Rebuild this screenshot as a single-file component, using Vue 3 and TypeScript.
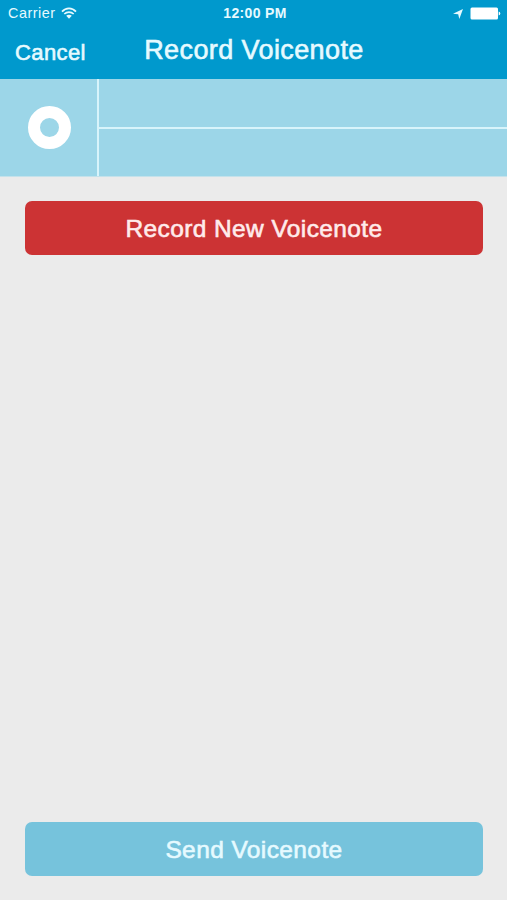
<script setup lang="ts">
import { ref } from 'vue'

const carrier = ref<string>('Carrier')
const time = ref<string>('12:00 PM')
</script>

<template>
  <main class="screen">
    <header class="top">
      <div class="status">
        <div class="network">
          <span class="carrier">{{ carrier }}</span>
          <svg class="wifi" width="16" height="12" viewBox="0 0 16 12" fill="none" stroke="#e6faff" stroke-width="1.7">
            <path d="M1 4.6C5 .2 11 .2 15 4.6" />
            <path d="M3.3 7C6 4.4 10 4.4 12.7 7" />
            <path d="M5.2 8.8C6.8 7.4 9.2 7.4 10.8 8.8L8 11.7Z" fill="#e6faff" stroke="none" />
          </svg>
        </div>
        <span class="time">{{ time }}</span>
        <div class="indicators">
          <svg width="10" height="10" viewBox="0 0 10 10" fill="#e6faff">
            <path d="M10 0L6.3 10L5.2 5.2L0 4.7Z" />
          </svg>
          <svg width="31" height="13" viewBox="0 0 31 13" fill="#fff">
            <rect x="0.5" y="0.5" width="27.5" height="12" rx="1.5" />
            <path d="M28.7 4.5Q30.3 5 30.3 6.5T28.7 8.5Z" />
          </svg>
        </div>
      </div>
      <nav class="nav">
        <button class="cancel" type="button">Cancel</button>
        <h1 class="title">Record Voicenote</h1>
      </nav>
    </header>
    <section class="recorder">
      <div class="disc"><span class="ring"></span></div>
      <div class="tracks">
        <div class="track"></div>
        <div class="track"></div>
      </div>
    </section>
    <section class="actions">
      <button class="action record" type="button">Record New Voicenote</button>
      <button class="action send" type="button">Send Voicenote</button>
    </section>
  </main>
</template>

<style>
body {
  margin: 0;
  background: #ebebeb;
}
</style>

<style scoped>
.screen {
  display: flex;
  flex-direction: column;
  width: 100%;
  height: 900px;
  overflow: hidden;
  background: #ebebeb;
  color: #e6faff;
  font-family: "Liberation Sans", Arial, sans-serif;
}
button {
  margin: 0;
  padding: 0;
  border: 0;
  background: none;
  color: inherit;
  font: inherit;
}
.top {
  height: 79px;
  flex: none;
  background: #0099cd;
}
.status {
  display: grid;
  grid-template-columns: 1fr auto 1fr;
  align-items: center;
  height: 27px;
  padding: 0 6px 0 8px;
}
.network {
  display: flex;
  align-items: center;
  gap: 6px;
}
.carrier {
  font-size: 14.4px;
  letter-spacing: 0.5px;
  line-height: 27px;
}
.wifi {
  margin-bottom: 2px;
}
.time {
  padding-left: 1px;
  font-size: 14px;
  font-weight: 700;
  letter-spacing: 0.35px;
  line-height: 27px;
}
.indicators {
  display: flex;
  align-items: center;
  justify-content: flex-end;
  gap: 7px;
}
.nav {
  display: grid;
  grid-template-columns: 110px 1fr 110px;
  height: 52px;
}
.nav .cancel {
  padding-left: 15px;
  text-align: left;
  font-size: 22px;
  line-height: 50px;
  letter-spacing: 0.4px;
  -webkit-text-stroke: 0.6px currentColor;
}
.title {
  margin: 0;
  padding-left: 1px;
  text-align: center;
  font-size: 27px;
  font-weight: 400;
  line-height: 47px;
  letter-spacing: 0.4px;
  white-space: nowrap;
  -webkit-text-stroke: 0.6px currentColor;
}
.recorder {
  display: flex;
  flex: none;
  height: 98px;
  box-sizing: border-box;
  border-bottom: 1px solid #c4e2eb;
  background: #9cd6e8;
}
.disc {
  display: grid;
  place-items: center;
  width: 97px;
  padding-left: 2px;
  box-sizing: border-box;
}
.ring {
  width: 19px;
  height: 19px;
  border: 12px solid #fff;
  border-radius: 50%;
}
.tracks {
  flex: 1;
  display: grid;
  grid-template-rows: 50px 1fr;
  border-left: 2px solid #d8f4fb;
}
.track:first-child {
  border-bottom: 2px solid #d8f4fb;
  box-sizing: border-box;
}
.actions {
  flex: 1;
  display: flex;
  flex-direction: column;
  justify-content: space-between;
  padding: 24px 24px 24px 25px;
}
.actions .action {
  height: 54px;
  border-radius: 7px;
  font-size: 24.5px;
  letter-spacing: 0.4px;
  line-height: 56px;
  -webkit-text-stroke: 0.6px currentColor;
}
.actions .record {
  background: #cc3334;
  color: #ffebeb;
}
.actions .send {
  background: #76c3dc;
}
</style>
